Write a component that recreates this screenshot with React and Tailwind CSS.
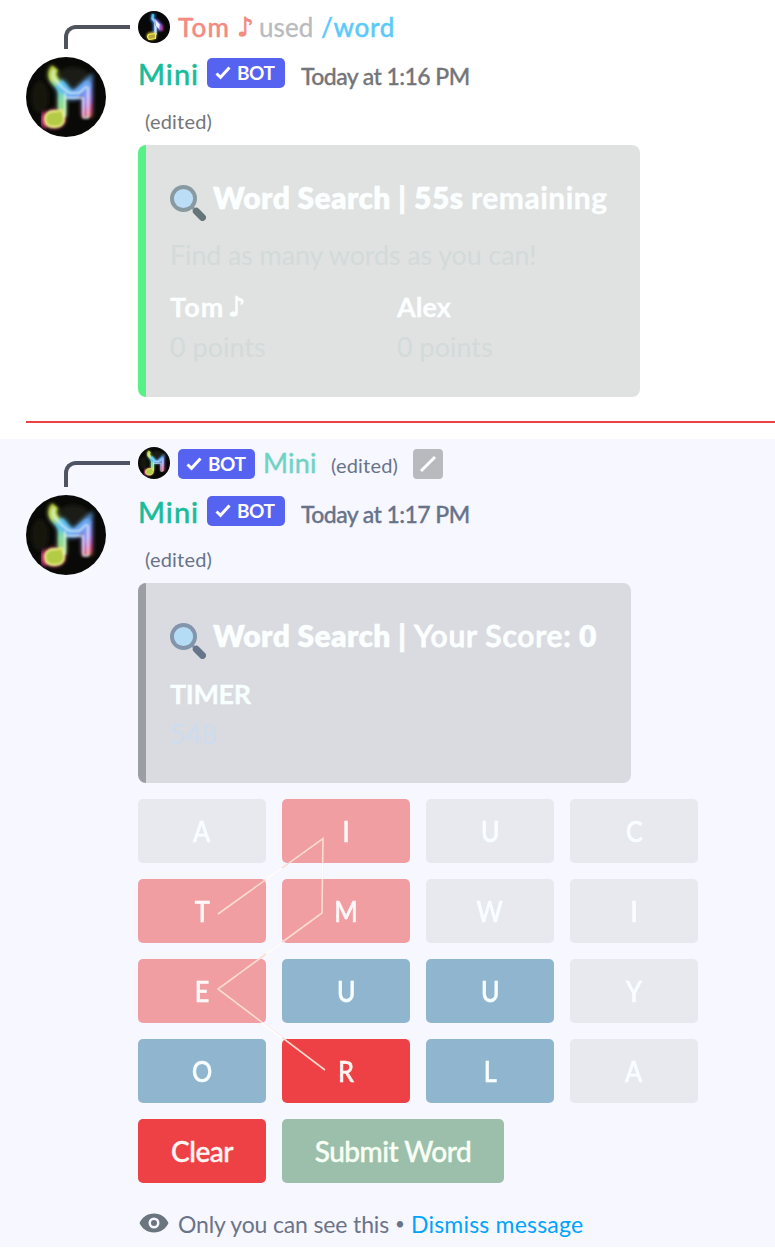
import React from "react";

function MiniAvatar({ className, id }) {
  const note = "M29 11 C25 16 26 21 30 25 C33 28 36 31 36 37 V59";
  const top = "M33 26 L41 35 C45 39 50 38 53 35 L61 28 V60";
  return (
    <svg viewBox="0 0 80 80" className={className}>
      <defs>
        <linearGradient id={id + "a"} gradientUnits="userSpaceOnUse" x1="24" y1="10" x2="36" y2="70">
          <stop offset="0" stopColor="#b5c83a" />
          <stop offset=".2" stopColor="#c5e468" />
          <stop offset=".38" stopColor="#5fc4dc" />
          <stop offset=".55" stopColor="#86dca8" />
          <stop offset="1" stopColor="#c4dc4a" />
        </linearGradient>
        <linearGradient id={id + "b"} gradientUnits="userSpaceOnUse" x1="34" y1="28" x2="64" y2="62">
          <stop offset="0" stopColor="#5cc8f0" />
          <stop offset=".4" stopColor="#6aa2f2" />
          <stop offset=".65" stopColor="#a58af2" />
          <stop offset=".85" stopColor="#e0559a" />
          <stop offset="1" stopColor="#b86a30" />
        </linearGradient>
        <filter id={id + "g"} x="-30%" y="-30%" width="160%" height="160%"><feGaussianBlur stdDeviation="2.2" /></filter>
        <filter id={id + "s"}><feGaussianBlur stdDeviation=".8" /></filter>
        <clipPath id={id + "c"}><circle cx="40" cy="40" r="40" /></clipPath>
      </defs>
      <g clipPath={`url(#${id}c)`}>
        <rect width="80" height="80" fill="#090907" />
        <ellipse cx="47" cy="20" rx="16" ry="10" fill="#1d1c17" filter={`url(#${id}g)`} />
        <ellipse cx="14" cy="40" rx="9" ry="16" fill="#15170c" filter={`url(#${id}g)`} />
        <g fill="none" filter={`url(#${id}g)`} opacity=".85">
          <path d={note} stroke={`url(#${id}a)`} strokeWidth="9" />
          <path d={top} stroke={`url(#${id}b)`} strokeWidth="11" />
          <ellipse cx="28" cy="62" rx="10" ry="8" fill="#c8d840" stroke="#d8417c" strokeWidth="3" />
        </g>
        <path d="M19 56 C15 62 17 67 20 70" stroke="#ee3a84" strokeWidth="4" fill="none" filter={`url(#${id}g)`} />
        <path d="M66 38 V58" stroke="#e0305a" strokeWidth="4" fill="none" filter={`url(#${id}g)`} />
        <g fill="none" filter={`url(#${id}s)`}>
          <path d={note} stroke={`url(#${id}a)`} strokeWidth="7" />
          <path d={top} stroke={`url(#${id}b)`} strokeWidth="8" strokeLinejoin="round" />
          <path d="M38 60 C39 67 35 70 28 70 C21 70 19 67 19 62 C19 57 23 54 28 54 C32 54 34 54 36 53 Z" fill="#b4cc45" stroke="#f0ee8a" strokeWidth="1.8" />
          <path d="M28 13 C26 18 27 21 31 25 C35 29 39 34 44 36 H53 L61 29 M39 36 V60 M38 41 H57 V61 M62 30 V61 H57" stroke="#f0fff8" strokeWidth="1.6" opacity=".8" />
        </g>
      </g>
    </svg>
  );
}

function NoteAvatar({ className }) {
  return (
    <svg viewBox="0 0 32 32" className={className}>
      <defs>
        <linearGradient id="na" gradientUnits="userSpaceOnUse" x1="0" y1="3" x2="0" y2="26">
          <stop offset="0" stopColor="#35b8e0" />
          <stop offset=".5" stopColor="#d5e4ff" />
          <stop offset=".75" stopColor="#c8dcf0" />
          <stop offset="1" stopColor="#e0e040" />
        </linearGradient>
        <filter id="nb" x="-60%" y="-40%" width="220%" height="180%"><feGaussianBlur stdDeviation="1.2" /></filter>
        <filter id="nc" x="-60%" y="-40%" width="220%" height="180%"><feGaussianBlur stdDeviation=".35" /></filter>
      </defs>
      <circle cx="16" cy="16" r="16" fill="#080808" />
      <g fill="none" filter="url(#nb)">
        <path d="M15.500 3 L14.500 8 L17 12 V24" stroke="#2f86d8" strokeWidth="4" />
        <path d="M17 9 L22 14 V20" stroke="#7a5ae0" strokeWidth="4" />
        <path d="M24 14 V20" stroke="#d03a90" strokeWidth="2" />
        <ellipse cx="13.500" cy="25" rx="5" ry="4" fill="#c8b020" />
      </g>
      <g filter="url(#nc)">
        <path d="M15 3 L14.500 7.500 L17.500 11 V24" fill="none" stroke="url(#na)" strokeWidth="2.400" />
        <path d="M17 8 L22 13.500 L21.500 18.500 L17.500 15 Z" fill="#e8eeff" stroke="#8a8af5" strokeWidth=".8" />
        <path d="M10.500 23.500 L17.500 22.500 V27.500 L11 28.500 L9.500 26 Z" fill="#b8a838" stroke="#f2ee60" strokeWidth="1.200" strokeLinejoin="round" />
      </g>
    </svg>
  );
}

function Magnifier({ ring, handle, lens }) {
  return (
    <svg viewBox="0 0 36 36" className="mt-[6px] h-9 w-9 shrink-0">
      <path d="M20 20 L26 26" stroke={ring} strokeWidth="3" />
      <path d="M26.300 26.300 L32.500 32.500" stroke={handle} strokeWidth="7" strokeLinecap="round" />
      <circle cx="13.500" cy="13.500" r="13.500" fill={ring} />
      <circle cx="13.500" cy="13.500" r="9.600" fill={lens} />
    </svg>
  );
}

function Bot({ wide }) {
  return (
    <span className={`flex h-[30px] items-center rounded-[5px] bg-[#5663f1] text-white ${wide ? "w-[78px]" : "w-[77px]"}`}>
      <svg viewBox="0 0 16 16" className="ml-2 h-4 w-4" fill="none" stroke="currentColor" strokeWidth="3">
        <path d="M1.500 8.500 L5.500 12.300 L14.500 2.500" />
      </svg>
      <span className="ml-[6px] text-[19px] leading-[30px] font-bold tracking-[-0.5px]">BOT</span>
    </span>
  );
}

function Edited({ className }) {
  return <span className={`text-[20px] leading-6 tracking-[0.2px] ${className}`}>(edited)</span>;
}

function Header({ time, color }) {
  return (
    <div className="flex items-start">
      <span className="mt-px w-[69px] text-[29px] leading-8 font-medium tracking-[1px] text-[#1abc9c] [-webkit-text-stroke:0.4px]">Mini</span>
      <span className="mt-px"><Bot wide /></span>
      <span className={`mt-[3px] ml-4 text-[23px] leading-8 font-medium tracking-[-0.57px] [-webkit-text-stroke:0.3px] ${color}`}>{time}</span>
    </div>
  );
}

const tones = {
  gray: "bg-[#e7e9ee] text-[#f8feff]",
  pink: "bg-[#f09ea2] text-[#fff8f8]",
  blue: "bg-[#90b6cf] text-[#f8feff]",
  red: "bg-[#ee4145] text-[#fff5f3]",
};
const tiles = [
  ["A", "gray"], ["I", "pink"], ["U", "gray"], ["C", "gray"],
  ["T", "pink"], ["M", "pink"], ["W", "gray"], ["I", "gray"],
  ["E", "pink"], ["U", "blue"], ["U", "blue"], ["Y", "gray"],
  ["O", "blue"], ["R", "red"], ["L", "blue"], ["A", "gray"],
];

export default function App() {
  return (
    <main className="min-h-[1257px] w-[775px] overflow-hidden bg-white font-['Lato',sans-serif] whitespace-nowrap">
      <section className="flex h-[421px] pt-[11px] pl-[26px]">
        <div className="w-28 shrink-0">
          <div className="mt-[14px] ml-[38px] h-6 w-[66px] rounded-tl-[12px] border-t-4 border-l-4 border-[#4f545c]" />
          <MiniAvatar id="m1" className="mt-2 h-20 w-20" />
        </div>
        <div>
          <div className="flex h-8 items-center text-[26px] leading-8">
            <NoteAvatar className="h-8 w-8" />
            <span className="ml-2 w-[59px] font-medium tracking-[1.2px] text-[#f38b80] [-webkit-text-stroke:0.4px]">Tom</span>
            <span className="w-[22px] font-['DejaVu_Sans',sans-serif] text-[26px] text-[#f38b80] [-webkit-text-stroke:0.9px]">♪</span>
            <span className="w-[62px] tracking-[0.1px] text-[#b9bbbe] [-webkit-text-stroke:0.3px]">used</span>
            <span className="font-medium tracking-[0.7px] text-[#5bcaf9] [-webkit-text-stroke:0.4px]">/word</span>
          </div>
          <div className="mt-[14px]"><Header time="Today at 1:16 PM" color="text-[#747579]" /></div>
          <Edited className="mt-[17px] ml-[7px] block text-[#747579]" />
          <article className="mt-3 h-[252px] w-[502px] rounded-[8px] border-l-8 border-[#57f287] bg-[#e0e2e1] pt-[34px] pl-6 text-[27px] leading-8 text-[#d3dada]">
            <h2 className="flex text-[30px] leading-9 font-bold text-[#fcffff]">
              <Magnifier ring="#8899a0" handle="#66757a" lens="#bbddf5" />
              <span className="ml-[7px] w-[201px] font-extrabold tracking-[0.35px] [-webkit-text-stroke:0.4px]">Word Search |</span>
              <span className="w-[57px] font-extrabold tracking-[0.5px] [-webkit-text-stroke:0.4px]">55s</span>
              <span className="tracking-[0.5px] [-webkit-text-stroke:0.4px]">remaining</span>
            </h2>
            <p className="mt-[18px] tracking-[-0.15px]">Find as many words as you can!</p>
            <div className="mt-5 grid grid-cols-[227px_1fr]">
              <div>
                <h3 className="flex font-bold text-[#fcffff] [-webkit-text-stroke:0.3px]"><span className="w-[58px] tracking-[1.2px]">Tom</span><span className="font-['DejaVu_Sans',sans-serif] font-normal [-webkit-text-stroke:0.9px]">♪</span></h3>
                <p className="mt-2">0 points</p>
              </div>
              <div>
                <h3 className="font-bold text-[#fcffff] [-webkit-text-stroke:0.3px]">Alex</h3>
                <p className="mt-2">0 points</p>
              </div>
            </div>
          </article>
        </div>
      </section>
      <hr className="ml-[26px] h-[2px] border-0 bg-[#ed4245]" />

      <section className="mt-4 flex h-[808px] bg-[#f6f7ff] pt-2 pl-[26px]">
        <div className="w-28 shrink-0">
          <div className="mt-[14px] ml-[38px] h-[26px] w-[66px] rounded-tl-[12px] border-t-4 border-l-4 border-[#4f5464]" />
          <MiniAvatar id="m2" className="mt-2 h-20 w-20" />
        </div>
        <div>
          <div className="flex h-8 items-center text-[27px] leading-8">
            <MiniAvatar id="m3" className="h-8 w-8" />
            <span className="mt-px mr-2 ml-2"><Bot /></span>
            <span className="w-[68px] tracking-[0.2px] text-[#6ed3c3] [-webkit-text-stroke:0.4px]">Mini</span>
            <Edited className="mt-[3px] w-[82px] text-[#68738a]" />
            <span className="mt-px flex h-[30px] w-[30px] items-center justify-center rounded-[4px] bg-[#b8babd]">
              <svg viewBox="0 0 20 20" className="h-5 w-5"><path d="M3 17 L17 3" stroke="#fff" strokeWidth="3" /></svg>
            </span>
          </div>
          <div className="mt-4"><Header time="Today at 1:17 PM" color="text-[#68738a]" /></div>
          <Edited className="mt-[17px] ml-[7px] block text-[#68738a]" />
          <article className="mt-3 h-[200px] w-[493px] rounded-[8px] border-l-8 border-[#9b9ea3] bg-[#d9dbe0] pt-[34px] pl-6 text-[27px] leading-8">
            <h2 className="flex text-[30px] leading-9 font-semibold text-[#fcffff]">
              <Magnifier ring="#8295ab" handle="#66758a" lens="#b5dcf5" />
              <span className="ml-[7px] w-[201px] font-extrabold tracking-[0.35px] [-webkit-text-stroke:0.4px]">Word Search |</span>
              <span className="w-[165px] tracking-[0.75px] [-webkit-text-stroke:0.8px]">Your Score:</span>
              <span className="font-extrabold [-webkit-text-stroke:0.4px]">0</span>
            </h2>
            <h3 className="mt-[19px] font-bold tracking-[-0.4px] text-[#f8ffff] [-webkit-text-stroke:0.3px]">TIMER</h3>
            <p className="mt-2 text-[#cddcee]">548</p>
          </article>
          <div className="relative mt-4 grid w-[560px] grid-cols-4 gap-4 text-[28px] leading-8 font-medium">
            {tiles.map(([letter, tone], i) => (
              <button key={i} className={`h-16 rounded-[5px] ${tones[tone]}`}>
                <span className="inline-block scale-x-90 [-webkit-text-stroke:0.6px]">{letter}</span>
              </button>
            ))}
            <svg viewBox="0 0 560 304" className="pointer-events-none absolute top-0 left-0 h-[304px] w-[560px]" fill="none">
              <path d="M80 115 L185 39.500 L184 114 L80 190 L187 271" stroke="#fbdcd0" strokeWidth="1.600" />
              <path d="M128 80.500 L144 69 M184.500 64 V80 M144 143.500 L128 155 M124 224 L144 239" stroke="#fff" strokeWidth="1.600" />
            </svg>
          </div>
          <div className="mt-4 flex gap-4 text-[28px] leading-8 font-medium [-webkit-text-stroke:0.4px]">
            <button className="h-16 w-32 rounded-[5px] bg-[#ee4145] tracking-[-0.5px] text-[#fff5f3]">Clear</button>
            <button className="h-16 w-[222px] rounded-[5px] bg-[#9bbfab] tracking-[-0.5px] text-[#f8fff4]">Submit Word</button>
          </div>
          <footer className="mt-[25px] flex h-8 items-center text-[23px] leading-8 text-[#6b738a]">
            <svg viewBox="0 0 30 20" className="mt-[-3px] ml-px h-5 w-[30px]">
              <path fillRule="evenodd" fill="#6b7580" d="M15 0.500 C8 0.500 3 4.500 .5 10 C3 15.500 8 19.500 15 19.500 C22 19.500 27 15.500 29.500 10 C27 4.500 22 .5 15 .5 Z M15 4.500 a5.500 5.500 0 1 1 0 11 a5.500 5.500 0 1 1 0 -11 Z" />
              <circle cx="15" cy="10" r="3" fill="#6b7580" />
            </svg>
            <span className="ml-[9px] w-[217px] tracking-[-0.15px]">Only you can see this</span>
            <span className="w-[16px] text-[17px]">•</span>
            <a className="tracking-[0.2px] text-[#00a4fb]">Dismiss message</a>
          </footer>
        </div>
      </section>
    </main>
  );
}
